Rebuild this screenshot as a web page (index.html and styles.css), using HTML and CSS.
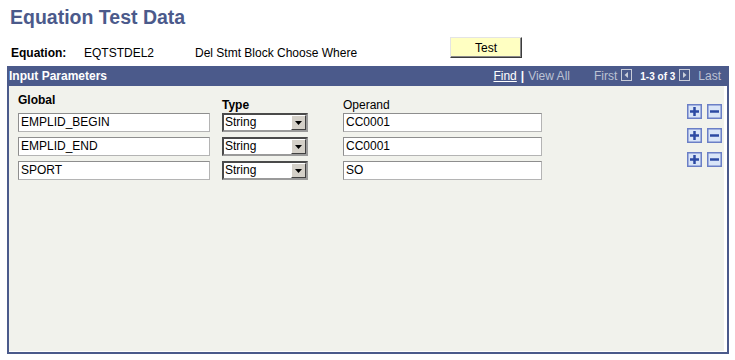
FILE: index.html
```html
<!DOCTYPE html>
<html>
<head>
<meta charset="utf-8">
<title>Equation Test Data</title>
<link rel="stylesheet" href="styles.css">
</head>
<body>
<h1 class="title">Equation Test Data</h1>
<div class="eqrow">
  <span class="eq-label">Equation:</span>
  <span class="eq-id">EQTSTDEL2</span>
  <span class="eq-desc">Del Stmt Block Choose Where</span>
  <button class="btn-test">Test</button>
</div>
<div class="grid-box">
  <div class="grid-head">
    <span class="grid-title">Input Parameters</span>
    <div class="nav">
      <span class="find">Find</span><span class="sep">|</span><span class="dim viewall">View All</span>
      <span class="dim first">First</span>
      <span class="arrowbox arrow-prev"><svg width="11" height="12" viewBox="0 0 11 12"><rect x="0.5" y="0.5" width="10" height="11" fill="none" stroke="#c9cdd9"/><polygon points="7,3 7,9 3.5,6" fill="#c9cdd9"/></svg></span>
      <span class="count">1-3 of 3</span>
      <span class="arrowbox"><svg width="11" height="12" viewBox="0 0 11 12"><rect x="0.5" y="0.5" width="10" height="11" fill="none" stroke="#c9cdd9"/><polygon points="4,3 4,9 7.5,6" fill="#c9cdd9"/></svg></span>
      <span class="dim last">Last</span>
    </div>
  </div>
  <div class="grid-body">
    <div class="grid">
      <div class="lbl-global">Global</div>
      <div class="lbl">Type</div>
      <div class="lbl lbl-plain">Operand</div>

      <div class="field">EMPLID_BEGIN</div>
      <div class="select"><span class="select-text">String</span><span class="select-btn"><svg width="7" height="4" viewBox="0 0 7 4"><polygon points="0,0 7,0 3.5,4" fill="#000"/></svg></span></div>
      <div class="field field-op">CC0001</div>

      <div class="field">EMPLID_END</div>
      <div class="select"><span class="select-text">String</span><span class="select-btn"><svg width="7" height="4" viewBox="0 0 7 4"><polygon points="0,0 7,0 3.5,4" fill="#000"/></svg></span></div>
      <div class="field field-op">CC0001</div>

      <div class="field">SPORT</div>
      <div class="select"><span class="select-text">String</span><span class="select-btn"><svg width="7" height="4" viewBox="0 0 7 4"><polygon points="0,0 7,0 3.5,4" fill="#000"/></svg></span></div>
      <div class="field field-op">SO</div>

      <div class="rowbtns">
        <div class="pair">
          <svg class="ibtn" width="15" height="15" viewBox="0 0 15 15"><rect x="0.75" y="0.75" width="13.5" height="13.5" fill="#d9e5f8" stroke="#6b7fc6" stroke-width="1.5"/><path d="M7.5 3v9M3 7.5h9" stroke="#2c4aa3" stroke-width="2.5"/></svg>
          <svg class="ibtn" width="15" height="15" viewBox="0 0 15 15"><rect x="0.75" y="0.75" width="13.5" height="13.5" fill="#d9e5f8" stroke="#6b7fc6" stroke-width="1.5"/><path d="M3 7.5h9" stroke="#2c4aa3" stroke-width="2.5"/></svg>
        </div>
        <div class="pair">
          <svg class="ibtn" width="15" height="15" viewBox="0 0 15 15"><rect x="0.75" y="0.75" width="13.5" height="13.5" fill="#d9e5f8" stroke="#6b7fc6" stroke-width="1.5"/><path d="M7.5 3v9M3 7.5h9" stroke="#2c4aa3" stroke-width="2.5"/></svg>
          <svg class="ibtn" width="15" height="15" viewBox="0 0 15 15"><rect x="0.75" y="0.75" width="13.5" height="13.5" fill="#d9e5f8" stroke="#6b7fc6" stroke-width="1.5"/><path d="M3 7.5h9" stroke="#2c4aa3" stroke-width="2.5"/></svg>
        </div>
        <div class="pair">
          <svg class="ibtn" width="15" height="15" viewBox="0 0 15 15"><rect x="0.75" y="0.75" width="13.5" height="13.5" fill="#d9e5f8" stroke="#6b7fc6" stroke-width="1.5"/><path d="M7.5 3v9M3 7.5h9" stroke="#2c4aa3" stroke-width="2.5"/></svg>
          <svg class="ibtn" width="15" height="15" viewBox="0 0 15 15"><rect x="0.75" y="0.75" width="13.5" height="13.5" fill="#d9e5f8" stroke="#6b7fc6" stroke-width="1.5"/><path d="M3 7.5h9" stroke="#2c4aa3" stroke-width="2.5"/></svg>
        </div>
      </div>
    </div>
  </div>
</div>
</body>
</html>
```
FILE: styles.css
```css
body {
  margin: 0;
  background: #fff;
  font-family: "Liberation Sans", Arial, sans-serif;
  font-size: 12px;
  color: #000;
}

.title {
  margin: 0;
  padding: 6px 0 0 10px;
  font-size: 19.5px;
  line-height: 22px;
  font-weight: bold;
  color: #4b5a8b;
}

.eqrow {
  display: flex;
  align-items: flex-end;
  margin-top: 9px;
  padding-left: 11px;
  line-height: 14px;
}

.eq-label { width: 73px; font-weight: bold; }
.eq-id { width: 111px; }
.eq-desc { width: 255px; }

.btn-test {
  width: 72px;
  height: 21px;
  margin-bottom: 2px;
  padding: 0;
  background: #ffffc2;
  border: 1px solid;
  border-color: #e4e4e4 #3c3c3c #3c3c3c #e4e4e4;
  box-shadow: inset -1px -1px 0 #8a8a8a;
  font-family: "Liberation Sans", Arial, sans-serif;
  font-size: 12px;
  color: #000;
}

.grid-box {
  margin: 6px 0 0 7px;
  width: 722px;
  height: 288px;
  box-sizing: border-box;
  border: 2px solid #4b5a8b;
  border-top: 0;
  display: flex;
  flex-direction: column;
}

.grid-head {
  height: 20px;
  flex: none;
  background: #4b5a8b;
  display: flex;
  justify-content: space-between;
  color: #fff;
  line-height: 20px;
  padding-right: 6px;
}

.grid-title { font-weight: bold; }

.nav {
  display: flex;
  align-items: flex-start;
}

.find { text-decoration: underline; margin-right: 4px; }
.sep { font-weight: bold; margin-right: 4px; }
.dim { color: #bcc2d4; }
.viewall { margin-right: 24px; }
.first { margin-right: 4px; }
.arrowbox { display: flex; margin-top: 3px; height: 12px; }
.arrow-prev { margin-right: 8px; }
.count {
  font-weight: bold;
  font-size: 10px;
  margin: 1px 4px 0 0;
}
.last { margin-left: 8px; }

.grid-body {
  flex: 1;
  background: #f1f2ec;
  margin: 0 3px 1px 0;
  padding-left: 9px;
}

.grid {
  display: grid;
  grid-template-columns: 204px 121px 344px 36px;
  grid-template-rows: 27px 24px 24px 24px;
  line-height: 14px;
}

.lbl-global { margin-top: 7px; font-weight: bold; }
.lbl { margin-top: 12px; font-weight: bold; }
.lbl-plain { font-weight: normal; }

.field {
  width: 192px;
  height: 19px;
  box-sizing: border-box;
  border: 1px solid #b4b4b4;
  border-top-color: #8e8e8e;
  border-left-color: #8e8e8e;
  background: #fff;
  padding-left: 2px;
  line-height: 17px;
}

.field-op { width: 199px; }

.select {
  width: 86px;
  height: 19px;
  box-sizing: border-box;
  border: 2px solid;
  border-color: #4a4a4a #9a9a9a #9a9a9a #4a4a4a;
  background: #fff;
  display: flex;
  justify-content: space-between;
}

.select-text { padding-left: 1px; line-height: 15px; }

.select-btn {
  width: 15px;
  height: 15px;
  box-sizing: border-box;
  background: #d4d0c8;
  border: 1px solid;
  border-color: #fff #404040 #404040 #fff;
  display: flex;
  align-items: center;
  justify-content: center;
}

.rowbtns {
  grid-column: 4;
  grid-row: 1 / span 4;
  padding-top: 18px;
  display: flex;
  flex-direction: column;
  gap: 9px;
}

.pair { display: flex; gap: 5px; }
.ibtn { display: block; }
```
